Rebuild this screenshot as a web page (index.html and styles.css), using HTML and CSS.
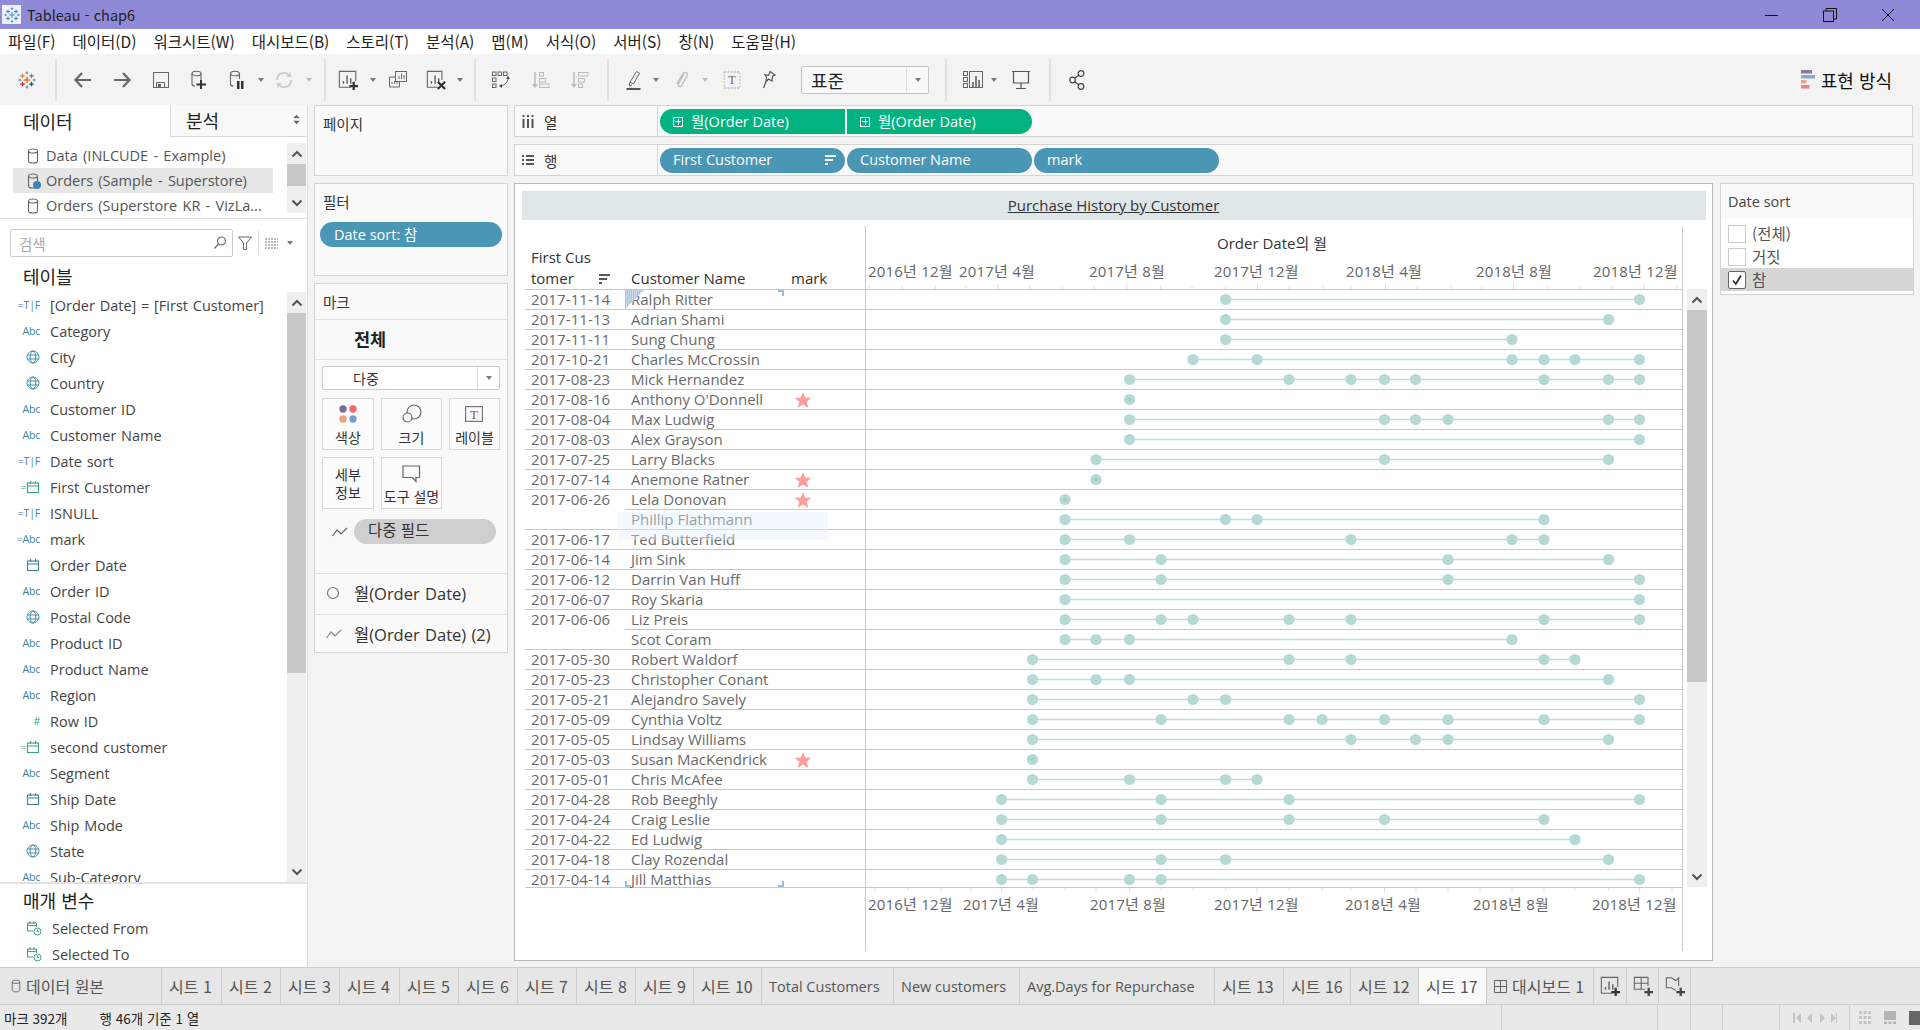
FILE: index.html
```html
<!DOCTYPE html>
<html lang="ko">
<head>
<meta charset="utf-8">
<title>Tableau - chap6</title>
<link rel="stylesheet" href="styles.css">
</head>
<body>
<svg class="defs" width="0" height="0">
  <symbol id="logo" viewBox="0 0 20 20">
    <g fill="none" stroke-width="1.4">
      <path stroke="#e8762b" stroke-width="1.7" d="M6.5 10h7M10 6.5v7"/>
      <path stroke="#e8762b" d="M2.5 5.5h5M5 3v5"/>
      <path stroke="#5b879b" d="M12.5 5.5h5M15 3v5"/>
      <path stroke="#c72037" d="M2.5 14.500h5M5 12v5"/>
      <path stroke="#1f457e" d="M12.5 14.500h5M15 12v5"/>
      <path stroke="#6f97aa" d="M8.500 2h3M10 .5v3M8.500 18h3M10 16.500v3M.5 10h3M2 8.500v3M16.500 10h3M18 8.500v3"/>
    </g>
  </symbol>
  <symbol id="logo-b" viewBox="0 0 20 20">
    <path fill="none" stroke="#3d8fc4" stroke-width="1.300" d="M6.5 10h7M10 6.500v7M2.500 5.500h5M5 3v5M12.500 5.500h5M15 3v5M2.500 14.500h5M5 12v5M12.500 14.500h5M15 12v5M8.500 2h3M10 .5v3M8.500 18h3M10 16.500v3M.5 10h3M2 8.500v3M16.500 10h3M18 8.500v3"/>
  </symbol>
  <symbol id="chev-up" viewBox="0 0 12 8"><path fill="none" stroke="#555" stroke-width="2" d="M1.500 6.500 6 2l4.500 4.500"/></symbol>
  <symbol id="chev-down" viewBox="0 0 12 8"><path fill="none" stroke="#555" stroke-width="2" d="M1.500 1.500 6 6l4.500-4.500"/></symbol>
  <symbol id="globe" viewBox="0 0 14 14"><g fill="none" stroke="#4a8eab"><circle cx="7" cy="7" r="6"/><ellipse cx="7" cy="7" rx="2.800" ry="6"/><path d="M1 5h12M1 9h12"/></g></symbol>
  <symbol id="cal" viewBox="0 0 14 14"><g fill="none" stroke="#3f7f9c" stroke-width="1.100"><rect x="1.500" y="3" width="11" height="9.500"/><path d="M1.500 6h11M4.500 1v3M9.500 1v3"/></g></symbol>
  <symbol id="cal-g" viewBox="0 0 14 14"><g fill="none" stroke="#3fa17d" stroke-width="1.100"><rect x="1.500" y="3" width="11" height="9.500"/><path d="M1.500 6h11M4.500 1v3M9.500 1v3"/></g></symbol>
  <symbol id="cal-clock" viewBox="0 0 16 16"><g fill="none" stroke="#3fa17d"><path d="M7 11H1.500V3h9v4M1.500 5.500h9M4 1v3M8 1v3"/><circle fill="#fff" cx="11.500" cy="11.500" r="3.500"/><path d="M11.500 9.500v2h1.500"/></g></symbol>
  <symbol id="db" viewBox="0 0 12 16"><g fill="none" stroke="#666" stroke-width="1.100"><ellipse cx="6" cy="3" rx="4.500" ry="2"/><path d="M1.500 3v10c0 1.100 2 2 4.500 2s4.500-.9 4.500-2V3"/></g></symbol>
  <symbol id="star" viewBox="0 0 20 20"><polygon fill="#ff9d9d" points="10,1 12.500,7.500 19.500,7.500 14,12 16,19 10,15 4,19 6,12 .5,7.500 7.500,7.500"/></symbol>
  <symbol id="sort" viewBox="0 0 12 12"><path d="M0 1h11v2H0zM0 5h8v2H0zM0 9h3v2H0z"/></symbol>
  <symbol id="minichart" viewBox="0 0 22 22"><g fill="none" stroke="#666" stroke-width="1.200"><path d="M14 19H1.500V1.500h18V12"/><path stroke-width="1.600" d="M6 15v-3M10 15V6M14 15V9"/></g><path fill="#333" d="M16 13h2.500v3.500H22V19h-3.500v3H16v-3h-3.500v-2.500H16z"/></symbol>
</svg>

<header class="titlebar">
  <span class="app-logo"><svg width="16" height="16"><use href="#logo-b"/></svg></span>
  <span class="app-title">Tableau - chap6</span>
  <div class="winctl">
    <svg width="14" height="14" viewBox="0 0 14 14"><path stroke="#111" d="M0 7.500h13"/></svg>
    <svg width="14" height="14" viewBox="0 0 14 14"><g fill="none" stroke="#111"><rect x=".5" y="3" width="10" height="10.500"/><path d="M3 3V.5h10.500V11H11"/></g></svg>
    <svg width="14" height="14" viewBox="0 0 14 14"><path stroke="#111" d="M1 1l12 12M13 1 1 13"/></svg>
  </div>
</header>

<nav class="menubar">
  <span>파일(F)</span><span>데이터(D)</span><span>워크시트(W)</span><span>대시보드(B)</span><span>스토리(T)</span><span>분석(A)</span><span>맵(M)</span><span>서식(O)</span><span>서버(S)</span><span>창(N)</span><span>도움말(H)</span>
</nav>

<div class="toolbar">
  <div class="tools">
    <svg width="18" height="18"><use href="#logo"/></svg>
    <i class="sep"></i>
    <svg width="20" height="18" viewBox="0 0 20 18"><path fill="none" stroke="#666" stroke-width="2.200" d="M18 9H3M9 2 2.500 9 9 16"/></svg>
    <svg width="20" height="18" viewBox="0 0 20 18"><path fill="none" stroke="#666" stroke-width="2.200" d="M2 9h15M11 2l6.500 7L11 16"/></svg>
    <svg width="16" height="16" viewBox="0 0 16 16"><g fill="none" stroke="#666"><rect x=".5" y=".5" width="15" height="15"/><path d="M3.500 15.500v-5h8v5"/></g><rect fill="#666" x="5" y="12" width="3" height="3"/></svg>
    <svg width="18" height="20" viewBox="0 0 18 20"><g fill="none" stroke="#666" stroke-width="1.100"><ellipse cx="6.500" cy="3.500" rx="4.500" ry="2.300"/><path d="M2 3.500V14c0 1.200 1.500 2 3 2M11 3.500V10"/></g><path fill="#333" d="M10 10h2v3.500h4v2h-4V19h-2v-3.500H6.500v-2H10z"/></svg>
    <svg width="16" height="20" viewBox="0 0 16 20"><g fill="none" stroke="#666" stroke-width="1.100"><ellipse cx="6" cy="3.500" rx="4.500" ry="2.300"/><path d="M1.500 3.500V14c0 1.200 1.500 2 3 2M10.500 3.500V9"/></g><path fill="#333" d="M8 11h2.500v8H8zM12 11h2.500v8H12z"/></svg>
    <i class="dd"></i>
    <svg width="18" height="18" viewBox="0 0 18 18"><g fill="none" stroke="#ccc" stroke-width="1.800"><path d="M2 9a7 7 0 0 1 12-5M16 9a7 7 0 0 1-12 5"/></g><path fill="#ccc" d="M11 6h5V1zM7 12H2v5z"/></svg>
    <i class="dd dd-off"></i>
    <i class="sep"></i>
    <svg width="20" height="20"><use href="#minichart"/></svg>
    <i class="dd"></i>
    <svg width="18" height="17" viewBox="0 0 18 17"><g fill="none" stroke="#666"><rect x="6.500" y=".5" width="11" height="10"/><path d="M6 6H.5v10h10v-5"/><path d="M10 8V5M12.500 8V2.500M15 8V4M3 13v-2M5.500 13v-3M8 13v-2"/></g></svg>
    <svg width="20" height="20" viewBox="0 0 22 22"><g fill="none" stroke="#666" stroke-width="1.200"><path d="M13 19H1.500V1.500h16V11"/><path stroke-width="1.600" d="M6 15v-3M10 15V6M14 13V9"/></g><path stroke="#333" stroke-width="2.400" d="M13 13l8 8M21 13l-8 8"/></svg>
    <i class="dd"></i>
    <i class="sep"></i>
    <svg width="18" height="18" viewBox="0 0 18 18"><g fill="none" stroke="#666"><rect x=".5" y="1" width="3.500" height="3.500"/><rect x="6" y="1" width="3.500" height="3.500"/><rect x="11.500" y="1" width="3.500" height="3.500"/><rect x=".5" y="7" width="3.500" height="3.500"/><rect x=".5" y="13" width="3.500" height="3.500"/><path d="M16 7c0 4-3 7-7 8"/></g><path fill="#444" d="M14 8l2-3 2 3zM10 13v4l-3-2z"/></svg>
    <svg width="18" height="18" viewBox="0 0 18 18"><g fill="none" stroke="#bbb"><path stroke-width="1.500" d="M3 1v14"/><rect x="7.500" y="1.500" width="4" height="3.500"/><rect x="7.500" y="7.500" width="6" height="3.500"/><rect x="7.500" y="13" width="9.500" height="3.500"/></g><path fill="#bbb" d="M0 13h6l-3 4z"/></svg>
    <svg width="18" height="18" viewBox="0 0 18 18"><g fill="none" stroke="#bbb"><path stroke-width="1.500" d="M3 1v14"/><rect x="7.500" y="1.500" width="9.500" height="3.500"/><rect x="7.500" y="7.500" width="6" height="3.500"/><rect x="7.500" y="13" width="4" height="3.500"/></g><path fill="#bbb" d="M0 13h6l-3 4z"/></svg>
    <i class="sep"></i>
    <svg width="16" height="20" viewBox="0 0 16 20"><path fill="none" stroke="#666" d="M10.500 1.500l3 1.800-6 10.500-3.500-1.600zM4 12.200 3 15.800l3-.8"/><path stroke="#555" stroke-width="2" d="M.5 19h14"/></svg>
    <i class="dd"></i>
    <svg width="14" height="20" viewBox="0 0 14 20"><path fill="none" stroke="#bbb" stroke-width="1.300" d="M10 4 4.500 14c-1 2.400 2 3.600 3.200 1.500L13 6c1.300-3-2.400-5-4-2.300L2.500 14"/></svg>
    <i class="dd dd-off"></i>
    <svg width="17" height="18" viewBox="0 0 18 18"><rect fill="none" stroke="#999" stroke-dasharray="2 1.500" x=".5" y=".5" width="17" height="17"/><text class="t-glyph" x="9" y="13.500" text-anchor="middle">T</text></svg>
    <svg width="14" height="20" viewBox="0 0 14 20"><path fill="none" stroke="#555" stroke-width="1.200" d="M8 1.500l5 3.500-2.500 1.200L10 11 6.500 9 3.800 12l.8-4.500L3 4.800 6.800 5.400zM3.800 12 1.500 18"/></svg>
    <div class="std-select"><span>표준</span><b><i class="dd"></i></b></div>
    <i class="sep"></i>
    <svg width="20" height="18" viewBox="0 0 20 18"><g fill="none" stroke="#666"><rect x=".5" y=".5" width="4" height="4"/><rect x=".5" y="6.500" width="4" height="4"/><rect x=".5" y="12.500" width="4" height="4"/><rect x="6.500" y=".5" width="13" height="16"/></g><path stroke="#666" stroke-width="1.600" d="M10 16v-5M13 16V5M16 16V9"/></svg>
    <i class="dd"></i>
    <svg width="18" height="20" viewBox="0 0 18 20"><g fill="none" stroke="#555" stroke-width="1.200"><path d="M0 1.500h18M1.500 1.500V13h15V1.500M9 13v5.500M4 18.500h10"/></g></svg>
    <i class="sep"></i>
    <svg width="16" height="20" viewBox="0 0 16 20"><g fill="none" stroke="#444" stroke-width="1.200"><circle cx="12" cy="3.500" r="2.800"/><circle cx="3.500" cy="10" r="2.800"/><circle cx="12" cy="16.500" r="2.800"/><path d="M9.800 5.200 5.700 8.300M5.700 11.700l4.100 3.100"/></g></svg>
  </div>
  <div class="showme">
    <svg width="14" height="19" viewBox="0 0 14 19"><rect fill="#8a7aa0" width="11" height="3.500"/><rect fill="#85a9d0" y="5" width="14" height="3.500"/><rect fill="#f0a783" y="10" width="5.500" height="3.500"/><rect fill="#f6808c" y="15" width="8.500" height="3.500"/></svg>
    <span>표현 방식</span>
  </div>
</div>

<main class="main">
  <aside class="data-pane">
    <div class="pane-tabs">
      <div class="tab-data">데이터</div>
      <div class="tab-analysis"><span>분석</span><svg width="7" height="11" viewBox="0 0 8 14"><path fill="#666" d="M0 5.500 4 1l4 4.500zM0 8.500 4 13l4-4.500z"/></svg></div>
    </div>
    <div class="sources">
      <div class="source-list">
        <div class="source"><svg width="12" height="16"><use href="#db"/></svg>Data (INLCUDE - Example)</div>
        <div class="source on"><svg width="12" height="16"><use href="#db"/></svg><em class="tick"></em>Orders (Sample - Superstore)</div>
        <div class="source"><svg width="12" height="16"><use href="#db"/></svg>Orders (Superstore KR - VizLa...</div>
      </div>
      <div class="vscroll vs-src">
        <div class="vs-btn"><svg width="12" height="8"><use href="#chev-up"/></svg></div>
        <div class="vs-thumb"></div>
        <div class="vs-rest"></div>
        <div class="vs-btn"><svg width="12" height="8"><use href="#chev-down"/></svg></div>
      </div>
    </div>
    <div class="searchrow">
      <div class="search"><span>검색</span><svg width="14" height="14" viewBox="0 0 14 14"><g fill="none" stroke="#666" stroke-width="1.200"><circle cx="8.500" cy="5" r="4"/><path d="M5.500 8 1.500 12.500"/></g></svg></div>
      <svg class="funnel" width="14" height="14" viewBox="0 0 14 14"><path fill="none" stroke="#666" d="M.5 1h13L8.500 7v6.500h-3V7z"/></svg>
      <i class="vdiv"></i>
      <svg class="listicon" width="13" height="11" viewBox="0 0 13 11"><path stroke="#777" stroke-dasharray="2 1" d="M0 1h13M0 4h13M0 7h13M0 10h13"/></svg>
      <i class="dd"></i>
    </div>
    <h2 class="section-h">테이블</h2>
    <div class="fields-wrap">
      <ul class="fields">
        <li><span class="ic">=T|F</span>[Order Date] = [First Customer]</li>
        <li><span class="ic">Abc</span>Category</li>
        <li><span class="ic"><svg width="14" height="14"><use href="#globe"/></svg></span>City</li>
        <li><span class="ic"><svg width="14" height="14"><use href="#globe"/></svg></span>Country</li>
        <li><span class="ic">Abc</span>Customer ID</li>
        <li><span class="ic">Abc</span>Customer Name</li>
        <li><span class="ic">=T|F</span>Date sort</li>
        <li><span class="ic ic-g">=<svg width="14" height="14"><use href="#cal-g"/></svg></span>First Customer</li>
        <li><span class="ic">=T|F</span>ISNULL</li>
        <li><span class="ic">=Abc</span>mark</li>
        <li><span class="ic"><svg width="14" height="14"><use href="#cal"/></svg></span>Order Date</li>
        <li><span class="ic">Abc</span>Order ID</li>
        <li><span class="ic"><svg width="14" height="14"><use href="#globe"/></svg></span>Postal Code</li>
        <li><span class="ic">Abc</span>Product ID</li>
        <li><span class="ic">Abc</span>Product Name</li>
        <li><span class="ic">Abc</span>Region</li>
        <li><span class="ic ic-g">#</span>Row ID</li>
        <li><span class="ic ic-g">=<svg width="14" height="14"><use href="#cal-g"/></svg></span>second customer</li>
        <li><span class="ic">Abc</span>Segment</li>
        <li><span class="ic"><svg width="14" height="14"><use href="#cal"/></svg></span>Ship Date</li>
        <li><span class="ic">Abc</span>Ship Mode</li>
        <li><span class="ic"><svg width="14" height="14"><use href="#globe"/></svg></span>State</li>
        <li><span class="ic">Abc</span>Sub-Category</li>
      </ul>
      <div class="vscroll vs-fields">
        <div class="vs-btn"><svg width="12" height="8"><use href="#chev-up"/></svg></div>
        <div class="vs-thumb"></div>
        <div class="vs-rest"></div>
        <div class="vs-btn"><svg width="12" height="8"><use href="#chev-down"/></svg></div>
      </div>
    </div>
    <div class="params">
      <h2 class="section-h">매개 변수</h2>
      <div class="param"><svg width="16" height="16"><use href="#cal-clock"/></svg>Selected From</div>
      <div class="param"><svg width="16" height="16"><use href="#cal-clock"/></svg>Selected To</div>
    </div>
  </aside>

  <section class="cards">
    <div class="card card-pages"><h3>페이지</h3></div>
    <div class="card card-filters">
      <h3>필터</h3>
      <div class="pill pill-blue pill-filter">Date sort: 참</div>
    </div>
    <div class="card card-marks">
      <h3 class="marks-h">마크</h3>
      <div class="marks-all">전체</div>
      <div class="marks-body">
        <div class="mark-select"><span>다중</span><b><i class="dd"></i></b></div>
        <div class="mark-btns">
          <div class="mbtn"><svg width="20" height="20" viewBox="0 0 22 22"><circle cx="5.500" cy="5.500" r="4" fill="#7c6a9c"/><circle cx="16.500" cy="5.500" r="4" fill="#f4656f"/><circle cx="5.500" cy="16.500" r="4" fill="#f0a07a"/><circle cx="16.500" cy="16.500" r="4" fill="#6d9fcf"/></svg><span>색상</span></div>
          <div class="mbtn"><svg width="20" height="20" viewBox="0 0 20 20"><g fill="none" stroke="#666" stroke-width="1.200"><circle cx="12" cy="8" r="7"/><circle cx="5.500" cy="13.500" r="4.500" fill="#f9f9f9"/></g></svg><span>크기</span></div>
          <div class="mbtn"><svg width="20" height="18" viewBox="0 0 20 18"><rect fill="none" stroke="#777" stroke-width="1.200" x=".6" y=".6" width="16.800" height="14.800"/><text class="t-glyph" x="9" y="12.500" text-anchor="middle">T</text></svg><span>레이블</span></div>
          <div class="mbtn mbtn-text"><span>세부</span><span>정보</span></div>
          <div class="mbtn"><svg width="20" height="18" viewBox="0 0 20 18"><path fill="none" stroke="#666" stroke-width="1.200" d="M1 1h16.500v11.500h-3.500v4l-3.500-4H1z"/></svg><span>도구 설명</span></div>
        </div>
        <div class="mark-field">
          <svg width="16" height="10" viewBox="0 0 16 10"><path fill="none" stroke="#666" stroke-width="1.200" d="M.5 9 5 3l4 4 6-6"/></svg>
          <div class="gray-pill">다중 필드</div>
        </div>
      </div>
      <div class="marks-row"><span class="mr-ic"><svg width="14" height="14" viewBox="0 0 14 14"><circle fill="none" stroke="#777" stroke-width="1.200" cx="7" cy="7" r="5.500"/></svg></span><span>월(Order Date)</span></div>
      <div class="marks-row"><span class="mr-ic"><svg width="16" height="10" viewBox="0 0 16 10"><path fill="none" stroke="#888" stroke-width="1.200" d="M.5 9 5 3l4 4 6-6"/></svg></span><span>월(Order Date) (2)</span></div>
    </div>
  </section>

  <section class="work">
    <div class="shelf">
      <div class="shelf-h"><svg width="12" height="13" viewBox="0 0 12 13"><path stroke="#555" stroke-width="2" d="M1.500 4v9M6 4v9M10.500 4v9M1.500 0v2M6 0v2M10.500 0v2"/></svg><span>열</span></div>
      <div class="shelf-p">
        <div class="pill pill-green pill-l"><em class="plus"></em>월(Order Date)</div>
        <div class="pill pill-green pill-r"><em class="plus"></em>월(Order Date)</div>
      </div>
    </div>
    <div class="shelf">
      <div class="shelf-h"><svg width="12" height="12" viewBox="0 0 12 12"><path stroke="#555" stroke-width="2" d="M0 2h2M4 2h8M0 6h2M4 6h8M0 10h2M4 10h8"/></svg><span>행</span></div>
      <div class="shelf-p">
        <div class="pill pill-blue pill-sh"><span>First Customer</span><svg width="12" height="12"><use href="#sort" fill="#fff"/></svg></div>
        <div class="pill pill-blue pill-sh"><span>Customer Name</span></div>
        <div class="pill pill-blue pill-sh"><span>mark</span></div>
      </div>
    </div>
    <div class="view-row">
      <div class="worksheet">
        <div class="ws-title"><span>Purchase History by Customer</span></div>
        <div class="chart">
          <div class="table">
            <div class="thead">
              <div class="th th-d"><span>First Cus</span><span class="th-l2">tomer<svg width="12" height="12"><use href="#sort" fill="#555"/></svg></span></div>
              <div class="th th-n">Customer Name</div>
              <div class="th th-m">mark</div>
              <div class="axis">
                <svg class="axis-svg" width="816" height="63">
                  <text class="ax-title" x="406" y="23" text-anchor="middle">Order Date의 월</text>
                  <text x="2" y="51">2016년 12월</text><text x="93" y="51">2017년 4월</text><text x="223" y="51">2017년 8월</text><text x="348" y="51">2017년 12월</text><text x="480" y="51">2018년 4월</text><text x="610" y="51">2018년 8월</text><text x="727" y="51">2018년 12월</text>
                  <path class="ticks" d="M3 59v4M36 60v3M69.500 60v3M99.500 60v3M132 58v5M164 60v3M196.500 60v3M228 60v3M261 58v5M294.500 60v3M326 60v3M359.500 60v3M391.500 58v5M423 60v3M457 60v3M485 60v3M519.500 58v5M551 60v3M585 60v3M615.500 60v3M647.500 58v5M681 60v3M713.500 60v3M746.500 60v3M778 58v5M811 60v3"/>
                </svg>
              </div>
            </div>
            <div class="rows">
              <div class="tr"><div class="td d">2017-11-14</div><div class="td n">Ralph Ritter<i class="sel-hatch"></i><i class="sel-br sel-tr"></i></div><div class="td m"></div><div class="td p"><svg><path d="M359.500 9.500H773.500"/><circle cx="359.500"/><circle cx="773.500"/></svg></div></div>
              <div class="tr"><div class="td d">2017-11-13</div><div class="td n">Adrian Shami</div><div class="td m"></div><div class="td p"><svg><path d="M359.500 9.500H742.500"/><circle cx="359.500"/><circle cx="742.500"/></svg></div></div>
              <div class="tr"><div class="td d">2017-11-11</div><div class="td n">Sung Chung</div><div class="td m"></div><div class="td p"><svg><path d="M359.500 9.500H646"/><circle cx="359.500"/><circle cx="646"/></svg></div></div>
              <div class="tr"><div class="td d">2017-10-21</div><div class="td n">Charles McCrossin</div><div class="td m"></div><div class="td p"><svg><path d="M327 9.500H773.500"/><circle cx="327"/><circle cx="391"/><circle cx="646"/><circle cx="678"/><circle cx="709"/><circle cx="773.500"/></svg></div></div>
              <div class="tr"><div class="td d">2017-08-23</div><div class="td n">Mick Hernandez</div><div class="td m"></div><div class="td p"><svg><path d="M263.500 9.500H773.500"/><circle cx="263.500"/><circle cx="423"/><circle cx="485"/><circle cx="518.500"/><circle cx="549.500"/><circle cx="678"/><circle cx="742.500"/><circle cx="773.500"/></svg></div></div>
              <div class="tr"><div class="td d">2017-08-16</div><div class="td n">Anthony O'Donnell</div><div class="td m"><svg width="18" height="18"><use href="#star"/></svg></div><div class="td p"><svg><circle cx="263.500"/><circle class="core" cx="263.500"/></svg></div></div>
              <div class="tr"><div class="td d">2017-08-04</div><div class="td n">Max Ludwig</div><div class="td m"></div><div class="td p"><svg><path d="M263.500 9.500H773.500"/><circle cx="263.500"/><circle cx="518.500"/><circle cx="549.500"/><circle cx="582"/><circle cx="742.500"/><circle cx="773.500"/></svg></div></div>
              <div class="tr"><div class="td d">2017-08-03</div><div class="td n">Alex Grayson</div><div class="td m"></div><div class="td p"><svg><path d="M263.500 9.500H773.500"/><circle cx="263.500"/><circle cx="773.500"/></svg></div></div>
              <div class="tr"><div class="td d">2017-07-25</div><div class="td n">Larry Blacks</div><div class="td m"></div><div class="td p"><svg><path d="M230 9.500H742.500"/><circle cx="230"/><circle cx="518.500"/><circle cx="742.500"/></svg></div></div>
              <div class="tr"><div class="td d">2017-07-14</div><div class="td n">Anemone Ratner</div><div class="td m"><svg width="18" height="18"><use href="#star"/></svg></div><div class="td p"><svg><circle cx="230"/><circle class="core" cx="230"/></svg></div></div>
              <div class="tr"><div class="td d open">2017-06-26</div><div class="td n">Lela Donovan</div><div class="td m"><svg width="18" height="18"><use href="#star"/></svg></div><div class="td p"><svg><circle cx="199"/><circle class="core" cx="199"/></svg></div></div>
              <div class="tr"><div class="td d"></div><div class="td n">Phillip Flathmann</div><div class="td m"></div><div class="td p"><svg><path d="M199 9.500H678"/><circle cx="199"/><circle cx="359.500"/><circle cx="391"/><circle cx="678"/></svg></div></div>
              <div class="tr"><div class="td d">2017-06-17</div><div class="td n">Ted Butterfield</div><div class="td m"></div><div class="td p"><svg><path d="M199 9.500H678"/><circle cx="199"/><circle cx="263.500"/><circle cx="485"/><circle cx="646"/><circle cx="678"/></svg></div></div>
              <div class="tr"><div class="td d">2017-06-14</div><div class="td n">Jim Sink</div><div class="td m"></div><div class="td p"><svg><path d="M199 9.500H742.500"/><circle cx="199"/><circle cx="295"/><circle cx="582"/><circle cx="742.500"/></svg></div></div>
              <div class="tr"><div class="td d">2017-06-12</div><div class="td n">Darrin Van Huff</div><div class="td m"></div><div class="td p"><svg><path d="M199 9.500H773.500"/><circle cx="199"/><circle cx="295"/><circle cx="582"/><circle cx="773.500"/></svg></div></div>
              <div class="tr"><div class="td d">2017-06-07</div><div class="td n">Roy Skaria</div><div class="td m"></div><div class="td p"><svg><path d="M199 9.500H773.500"/><circle cx="199"/><circle cx="773.500"/></svg></div></div>
              <div class="tr"><div class="td d open">2017-06-06</div><div class="td n">Liz Preis</div><div class="td m"></div><div class="td p"><svg><path d="M199 9.500H773.500"/><circle cx="199"/><circle cx="295"/><circle cx="327"/><circle cx="423"/><circle cx="485"/><circle cx="678"/><circle cx="773.500"/></svg></div></div>
              <div class="tr"><div class="td d"></div><div class="td n">Scot Coram</div><div class="td m"></div><div class="td p"><svg><path d="M199 9.500H646"/><circle cx="199"/><circle cx="230"/><circle cx="263.500"/><circle cx="646"/></svg></div></div>
              <div class="tr"><div class="td d">2017-05-30</div><div class="td n">Robert Waldorf</div><div class="td m"></div><div class="td p"><svg><path d="M166.500 9.500H709"/><circle cx="166.500"/><circle cx="423"/><circle cx="485"/><circle cx="678"/><circle cx="709"/></svg></div></div>
              <div class="tr"><div class="td d">2017-05-23</div><div class="td n">Christopher Conant</div><div class="td m"></div><div class="td p"><svg><path d="M166.500 9.500H742.500"/><circle cx="166.500"/><circle cx="230"/><circle cx="263.500"/><circle cx="742.500"/></svg></div></div>
              <div class="tr"><div class="td d">2017-05-21</div><div class="td n">Alejandro Savely</div><div class="td m"></div><div class="td p"><svg><path d="M166.500 9.500H773.500"/><circle cx="166.500"/><circle cx="327"/><circle cx="359.500"/><circle cx="773.500"/></svg></div></div>
              <div class="tr"><div class="td d">2017-05-09</div><div class="td n">Cynthia Voltz</div><div class="td m"></div><div class="td p"><svg><path d="M166.500 9.500H773.500"/><circle cx="166.500"/><circle cx="295"/><circle cx="423"/><circle cx="456"/><circle cx="518.500"/><circle cx="582"/><circle cx="678"/><circle cx="773.500"/></svg></div></div>
              <div class="tr"><div class="td d">2017-05-05</div><div class="td n">Lindsay Williams</div><div class="td m"></div><div class="td p"><svg><path d="M166.500 9.500H742.500"/><circle cx="166.500"/><circle cx="485"/><circle cx="549.500"/><circle cx="582"/><circle cx="742.500"/></svg></div></div>
              <div class="tr"><div class="td d">2017-05-03</div><div class="td n">Susan MacKendrick</div><div class="td m"><svg width="18" height="18"><use href="#star"/></svg></div><div class="td p"><svg><circle cx="166.500"/><circle class="core" cx="166.500"/></svg></div></div>
              <div class="tr"><div class="td d">2017-05-01</div><div class="td n">Chris McAfee</div><div class="td m"></div><div class="td p"><svg><path d="M166.500 9.500H391"/><circle cx="166.500"/><circle cx="263.500"/><circle cx="359.500"/><circle cx="391"/></svg></div></div>
              <div class="tr"><div class="td d">2017-04-28</div><div class="td n">Rob Beeghly</div><div class="td m"></div><div class="td p"><svg><path d="M135.500 9.500H773.500"/><circle cx="135.500"/><circle cx="295"/><circle cx="423"/><circle cx="773.500"/></svg></div></div>
              <div class="tr"><div class="td d">2017-04-24</div><div class="td n">Craig Leslie</div><div class="td m"></div><div class="td p"><svg><path d="M135.500 9.500H678"/><circle cx="135.500"/><circle cx="295"/><circle cx="423"/><circle cx="518.500"/><circle cx="678"/></svg></div></div>
              <div class="tr"><div class="td d">2017-04-22</div><div class="td n">Ed Ludwig</div><div class="td m"></div><div class="td p"><svg><path d="M135.500 9.500H709"/><circle cx="135.500"/><circle cx="709"/></svg></div></div>
              <div class="tr"><div class="td d">2017-04-18</div><div class="td n">Clay Rozendal</div><div class="td m"></div><div class="td p"><svg><path d="M135.500 9.500H742.500"/><circle cx="135.500"/><circle cx="295"/><circle cx="359.500"/><circle cx="742.500"/></svg></div></div>
              <div class="tr tr-last"><div class="td d">2017-04-14</div><div class="td n">Jill Matthias<i class="sel-br sel-bl"></i><i class="sel-br sel-brr"></i></div><div class="td m"></div><div class="td p"><svg><path d="M135.500 9.500H773.500"/><circle cx="135.500"/><circle cx="166.500"/><circle cx="263.500"/><circle cx="295"/><circle cx="773.500"/></svg></div></div>
              <div class="ghost"></div>
            </div>
            <div class="tfoot">
              <div class="axis axis-b">
                <svg class="axis-svg" width="816" height="62">
                  <path class="ticks" d="M9 0v3M42 0v3M75 0v3M105 0v3M135.500 0v5M167 0v3M199 0v3M230 0v3M263.500 0v5M295 0v3M327 0v3M359.500 0v3M391 0v5M423 0v3M456 0v3M485 0v3M518.500 0v5M550 0v3M582 0v3M614 0v3M646 0v5M678 0v3M709 0v3M742.500 0v3M773.500 0v5M806 0v3"/>
                  <text x="2" y="22">2016년 12월</text><text x="97" y="22">2017년 4월</text><text x="224" y="22">2017년 8월</text><text x="348" y="22">2017년 12월</text><text x="479" y="22">2018년 4월</text><text x="607" y="22">2018년 8월</text><text x="726" y="22">2018년 12월</text>
                </svg>
              </div>
            </div>
          </div>
          <div class="vscroll vs-chart">
            <div class="vs-btn"><svg width="12" height="8"><use href="#chev-up"/></svg></div>
            <div class="vs-thumb"></div>
            <div class="vs-rest"></div>
            <div class="vs-btn"><svg width="12" height="8"><use href="#chev-down"/></svg></div>
          </div>
        </div>
      </div>
      <div class="filter-card">
        <div class="filter-h">Date sort</div>
        <div class="filter-list">
          <div class="fopt"><i class="cb"></i><span>(전체)</span></div>
          <div class="fopt"><i class="cb"></i><span>거짓</span></div>
          <div class="fopt on"><i class="cb cb-on"><svg width="12" height="12" viewBox="0 0 12 12"><path fill="none" stroke="#333" stroke-width="1.800" d="M2 6.500 4.800 10 10 1.500"/></svg></i><span>참</span></div>
        </div>
      </div>
    </div>
  </section>
</main>

<div class="tabs">
  <div class="tab tab-ko tab-src"><svg width="10" height="14"><use href="#db"/></svg>데이터 원본</div>
  <div class="tab tab-ko">시트 1</div><div class="tab tab-ko">시트 2</div><div class="tab tab-ko">시트 3</div><div class="tab tab-ko">시트 4</div><div class="tab tab-ko">시트 5</div><div class="tab tab-ko">시트 6</div><div class="tab tab-ko">시트 7</div><div class="tab tab-ko">시트 8</div><div class="tab tab-ko">시트 9</div><div class="tab tab-ko">시트 10</div>
  <div class="tab">Total Customers</div><div class="tab">New customers</div><div class="tab">Avg.Days for Repurchase</div>
  <div class="tab tab-ko">시트 13</div><div class="tab tab-ko">시트 16</div><div class="tab tab-ko">시트 12</div><div class="tab tab-ko tab-on">시트 17</div>
  <div class="tab tab-ko tab-dash"><svg width="13" height="13" viewBox="0 0 13 13"><path fill="none" stroke="#666" d="M.5.500h12v12H.5zM6.500.5v12M.5 6.500h12"/></svg>대시보드 1</div>
  <div class="tab tab-icon"><svg width="20" height="20"><use href="#minichart"/></svg></div>
  <div class="tab tab-icon"><svg width="20" height="20" viewBox="0 0 22 22"><path fill="none" stroke="#666" stroke-width="1.200" d="M13 14.500H1.500V1.500h15V11M9 1.500v13M1.500 8h15"/><path fill="#444" d="M16 13h2.500v3.500H22V19h-3.500v3H16v-3h-3.500v-2.500H16z"/></svg></div>
  <div class="tab tab-icon"><svg width="20" height="20" viewBox="0 0 22 22"><path fill="none" stroke="#666" stroke-width="1.200" d="M12 16 7 13H1.500V2H7l5 3 3-3v9"/><path fill="#444" d="M16 13h2.500v3.500H22V19h-3.500v3H16v-3h-3.500v-2.500H16z"/></svg></div>
  <div class="tab tab-fill"></div>
</div>

<footer class="status">
  <div class="st st-main"><span>마크 392개</span><span>행 46개 기준 1 열</span></div>
  <div class="st"></div><div class="st"></div><div class="st"></div><div class="st"></div>
  <div class="st st-nav">
    <svg width="44" height="12" viewBox="0 0 44 12"><g fill="#c4c4c4"><path d="M0 1h2v10H0zM8 1v10L3 6zM19 1v10l-5-5zM27 1v10l5-5zM38 1v10l5-5zM43 1h1v10h-1z"/></g></svg>
  </div>
  <div class="st st-views">
    <svg width="12" height="14" viewBox="0 0 12 14"><path fill="#c4c4c4" d="M0 0h3v3H0zM4.500 0h3v3h-3zM9 0h3v3H9zM0 5h3v3H0zM4.500 5h3v3h-3zM9 5h3v3H9zM0 10h3v3H0zM4.500 10h3v3h-3zM9 10h3v3H9z"/></svg>
    <svg width="12" height="14" viewBox="0 0 12 14"><path fill="#b4b4b4" d="M0 0h12v9H0zM0 10.500h3V13H0zM4.500 10.500h3V13h-3zM9 10.500h3V13H9z"/></svg>
    <svg width="12" height="14" viewBox="0 0 12 14"><rect fill="#666" width="11" height="14"/></svg>
  </div>
</footer>
</body>
</html>
```
FILE: styles.css
```css
* { box-sizing: border-box; }
html, body { margin: 0; height: 100%; }
body {
  width: 1920px; height: 1030px; overflow: hidden;
  display: flex; flex-direction: column;
  font-family: "Open Sans", "Noto Sans CJK KR", sans-serif;
  font-size: 14.5px; color: #333; background: #f3f3f3;
}
.defs { position: absolute; }
h2, h3, ul { margin: 0; padding: 0; font-weight: 400; }
em, i { font-style: normal; }

/* chrome */
.titlebar { height: 29px; background: #8f8ad8; display: flex; align-items: center; flex: none; }
.app-logo { width: 19px; height: 19px; margin-left: 2px; background: #eef; display: flex; align-items: center; justify-content: center; }
.app-title { margin-left: 6px; font: 14.5px "Noto Sans CJK KR", sans-serif; color: #222; }
.winctl { margin-left: auto; display: flex; gap: 44px; padding-right: 25px; }

.menubar { height: 25px; background: #fff; display: flex; align-items: center; gap: 17px; padding-left: 8px; flex: none; font: 15.5px/25px "Noto Sans CJK KR", sans-serif; color: #222; }

.toolbar { height: 51px; flex: none; background: #f3f3f3; display: flex; align-items: center; padding-left: 27px; }
.tools { display: grid; align-items: center; height: 100%; grid-auto-flow: column;
  grid-template-columns: 29px 27px 39px 39px 38px 38px 24px 23px 25px 16px 23px 25px 25px 38px 24px 15px 26px 40px 39px 28px 26px 22px 25px 24px 27px 37px 96px 81px 27px 21px 27px 29px 27px; }
.tools > * { justify-self: start; transform: translateX(-50%); }
.sep { width: 1px; height: 42px; background: #ccc; display: block; }
.dd { display: block; width: 0; height: 0; border: 3.5px solid transparent; border-top: 4px solid #777; border-bottom: 0; }
.dd-off { border-top-color: #bbb; }
.t-glyph { font: 400 13px "Liberation Serif", serif; fill: #666; }
.std-select { width: 128px; height: 28px; background: #f8f8f8; border: 1px solid #c4c4c4; border-radius: 2px; display: flex; align-items: center; font: 18px "Noto Sans CJK KR", sans-serif; color: #222; padding-left: 9px; }
.std-select span { flex: 1; }
.std-select b, .mark-select b { width: 22px; height: 100%; border-left: 1px solid #ddd; display: flex; align-items: center; justify-content: center; }
.showme { margin-left: auto; margin-right: 28px; display: flex; align-items: center; gap: 6px; font: 18px "Noto Sans CJK KR", sans-serif; color: #111; }

.main { height: 862px; flex: none; display: flex; }

/* data pane */
.data-pane { width: 308px; flex: none; background: #fff; border-right: 1px solid #ddd; display: flex; flex-direction: column; }
.pane-tabs { height: 32px; display: flex; font: 18px "Noto Sans CJK KR", sans-serif; color: #222; flex: none; }
.tab-data { width: 170px; padding: 3px 0 0 23px; }
.tab-analysis { flex: 1; background: #f9f9f9; border: 1px solid #d8d8d8; border-width: 0 0 1px 1px; display: flex; align-items: center; justify-content: space-between; padding: 0 7px 2px 15px; }
.sources { height: 82px; flex: none; display: flex; border-bottom: 1px solid #e2e2e2; padding-top: 6px; }
.source-list { width: 287px; padding-left: 13px; padding-right: 14px; color: #555; font-size: 14.5px; }
.source { height: 25px; display: flex; align-items: center; gap: 7px; padding-left: 14px; white-space: nowrap; word-spacing: 1.5px; position: relative; }
.source.on { background: #e6e6e6; }
.tick { position: absolute; left: 20px; top: 13px; width: 8px; height: 8px; border-radius: 50%; background: #3a86b4; }
.vscroll { display: flex; flex-direction: column; background: #efefef; width: 19px; flex: none; }
.vs-btn { height: 21px; display: flex; align-items: center; justify-content: center; flex: none; }
.vs-thumb { background: #c8c8c8; flex: none; }
.vs-rest { flex: 1; }
.vs-src { height: 70px; }
.vs-src .vs-thumb { height: 22px; }
.vs-fields { height: 590px; }
.vs-fields .vs-thumb { height: 360px; }
.vs-chart { width: 20px; height: 598px; margin: 63px 0 0 4px; }
.vs-chart .vs-thumb { height: 372px; }

.searchrow { height: 44px; flex: none; display: flex; align-items: center; padding: 6px 0 2px 10px; }
.search { width: 223px; height: 28px; border: 1px solid #ccc; border-radius: 2px; display: flex; align-items: center; justify-content: space-between; padding: 0 5px 0 8px; color: #aaa; font-size: 14.5px; }
.funnel { margin-left: 5px; }
.vdiv { width: 1px; height: 24px; background: #ddd; margin: 0 6px 0 6px; }
.listicon { margin-right: 9px; }
.section-h { font: 18px/27px "Noto Sans CJK KR", sans-serif; color: #222; padding-left: 23px; flex: none; height: 27px; }
.fields-wrap { height: 592px; flex: none; display: flex; overflow: hidden; align-items: flex-start; border-bottom: 2px solid #e2e2e2; margin-top: 2px; }
.fields { width: 287px; list-style: none; flex: none; height: 592px; overflow: hidden; color: #444; }
.fields li { height: 26px; display: flex; align-items: center; white-space: nowrap; word-spacing: 1px; }
.ic { width: 40px; margin-right: 10px; text-align: right; font-size: 10.5px; color: #3f7f9c; display: flex; justify-content: flex-end; align-items: center; letter-spacing: -.2px; }
.ic-g { color: #3fa17d; }
.params { flex: 1; }
.params .section-h { height: 31px; line-height: 32px; }
.param { height: 26px; display: flex; align-items: center; gap: 10px; padding-left: 26px; color: #444; }

/* cards */
.cards { width: 194px; margin-left: 6px; flex: none; display: flex; flex-direction: column; gap: 7px; }
.card { background: #f9f9f9; border: 1px solid #d4d4d4; flex: none; }
.card h3 { font: 14.5px/36px "Noto Sans CJK KR", sans-serif; color: #333; padding-left: 8px; }
.card-pages { height: 71px; }
.card-filters { height: 93px; }
.card-marks { height: 370px; display: flex; flex-direction: column; }
.pill { color: #fff; height: 25px; display: flex; align-items: center; white-space: nowrap; font-size: 14.5px; padding-bottom: 2px; }
.pill-blue { background: #4a96b5; border-radius: 13px; }
.pill-filter { width: 182px; margin: 2px 0 0 5px; padding-left: 14px; }
.marks-h { height: 36px; border-bottom: 1px solid #e2e2e2; flex: none; }
.marks-all { height: 40px; border-bottom: 1px solid #e2e2e2; padding-left: 39px; font: 700 17.5px/38px "Noto Sans CJK KR", sans-serif; color: #222; flex: none; }
.marks-body { height: 214px; border-bottom: 1px solid #e2e2e2; padding: 6px 7px 0; flex: none; }
.mark-select { height: 24px; border: 1px solid #ccc; border-radius: 2px; background: #fff; display: flex; align-items: center; padding-left: 30px; font: 14px "Noto Sans CJK KR", sans-serif; width: 178px; }
.mark-select span { flex: 1; }
.mark-btns { display: grid; grid-template-columns: 52px 61px 51px; gap: 7px; grid-auto-rows: 52px; margin-top: 8px; }
.mbtn { background: #fbfbfb; border: 1px solid #d8d8d8; display: flex; flex-direction: column; align-items: center; justify-content: flex-end; padding-bottom: 3px; gap: 4px; font: 14px/18px "Noto Sans CJK KR", sans-serif; color: #333; white-space: nowrap; }
.mbtn-text { justify-content: center; gap: 0; padding: 0; }
.mark-field { display: flex; align-items: center; margin-top: 10px; padding-left: 10px; gap: 6px; }
.gray-pill { width: 142px; height: 25px; border-radius: 13px; background: #cfcfcf; font: 15.5px/21px "Noto Sans CJK KR", sans-serif; padding-left: 14px; }
.marks-row { height: 40px; display: flex; align-items: center; flex: none; font-size: 16.5px; color: #333; padding-bottom: 2px; word-spacing: 1px; }
.marks-row + .marks-row { border-top: 1px solid #e2e2e2; }
.mr-ic { width: 39px; padding-left: 11px; display: flex; flex: none; }

/* shelves */
.work { width: 1399px; margin-left: 6px; flex: none; display: flex; flex-direction: column; gap: 7px; }
.shelf { height: 32px; flex: none; background: #f9f9f9; border: 1px solid #d4d4d4; display: flex; }
.shelf-h { width: 143px; border-right: 1px solid #d8d8d8; display: flex; align-items: center; gap: 10px; padding-left: 7px; font: 14.5px "Noto Sans CJK KR", sans-serif; flex: none; }
.shelf-p { display: flex; gap: 2px; padding: 3px 0 0 2px; }
.pill-green { background: #02b280; width: 185px; padding-left: 13px; gap: 8px; }
.pill-l { border-radius: 13px 0 0 13px; }
.pill-r { border-radius: 0 13px 13px 0; }
.plus { width: 10px; height: 10px; margin-top: 2px; border: 1px solid #fff; background: linear-gradient(#fff,#fff) center/6px 1px no-repeat, linear-gradient(#fff,#fff) center/1px 6px no-repeat; }
.pill-sh { width: 185px; padding: 0 8px 2px 13px; justify-content: space-between; }

/* worksheet */
.view-row { display: flex; gap: 7px; align-items: flex-start; }
.worksheet { width: 1199px; height: 778px; flex: none; background: #fff; border: 1px solid #b8b8b8; padding: 7px 6px 0 7px; }
.ws-title { height: 29px; background: #dfe6e8; text-align: center; font-size: 15px; line-height: 29px; color: #333; text-decoration: underline; padding-right: 1px; }
.chart { display: flex; margin: 6px 0 0 3px; align-items: flex-start; }
.table { width: 1158px; flex: none; position: relative; }
.thead { height: 64px; display: flex; border-bottom: 1px solid #c8c8c8; align-items: flex-end; }
.th { font-size: 15px; color: #333; height: 22px; line-height: 22px; }
.th-d { width: 100px; padding-left: 6px; height: 43px; display: flex; flex-direction: column; }
.th-l2 { display: flex; justify-content: space-between; align-items: center; padding-right: 14px; line-height: 21px; }
.th-n { width: 160px; padding-left: 6px; }
.th-m { width: 80px; padding-left: 6px; }
.axis { width: 818px; height: 63px; border: 1px solid #c8c8c8; border-width: 0 1px; align-self: flex-start; }
.axis-svg { display: block; overflow: visible; }
.axis-svg text { font-family: "Open Sans", "Noto Sans CJK KR", sans-serif; font-size: 15px; fill: #666; letter-spacing: .2px; }
.axis-svg .ax-title { fill: #333; font-size: 15px; letter-spacing: 0; }
.ticks { stroke: #ddd; fill: none; }
.tr { height: 20px; display: flex; }
.td { height: 20px; border-bottom: 1px solid #c8c8c8; font-size: 15px; line-height: 19px; color: #6a6a6a; padding-left: 6px; flex: none; white-space: nowrap; position: relative; }
.td.d { width: 100px; letter-spacing: .1px; }
.td.d.open { border-bottom-color: transparent; }
.td.n { width: 160px; }
.td.m { width: 80px; padding-left: 9px; }
.td.m svg { display: block; margin-top: 1px; }
.td.p { width: 818px; padding: 0; border-left: 1px solid #c8c8c8; border-right: 1px solid #c8c8c8; }
.td.p svg { display: block; width: 816px; height: 19px; overflow: visible; }
.td.p path { fill: none; stroke: #bcdfd9; stroke-width: 1.5; }
.td.p circle { r: 5.6px; cy: 9.5px; fill: #b5d9d4; }
.td.p circle.core { r: 2px; fill: #a3cfc8; }
.tr-last, .tr-last .td { height: 18px; }
.tfoot { height: 63px; }
.axis-b { height: 63px; margin-left: 340px; }
.ghost { position: absolute; left: 93px; top: 286px; width: 210px; height: 28px; background: rgba(225, 240, 252, .4); }
.sel-hatch { position: absolute; left: 0; top: 0; width: 19px; height: 19px; background: repeating-linear-gradient(90deg, #a3c3de 0 1px, #c8dced 1px 2px); clip-path: polygon(0 0, 100% 0, 0 100%); }
.sel-br { position: absolute; width: 6px; height: 6px; border: 0 solid #9dbcd8; }
.sel-tr { right: 1px; top: 0; border-width: 2px 2px 0 0; }
.sel-bl { left: 0; bottom: 0; border-width: 0 0 2px 2px; }
.sel-brr { right: 1px; bottom: 0; border-width: 0 2px 2px 0; }

/* filter card */
.filter-card { width: 194px; height: 112px; flex: none; background: #fff; border: 1px solid #d4d4d4; }
.filter-h { height: 35px; background: #f9f9f9; padding-left: 7px; line-height: 36px; font-size: 14.5px; color: #444; }
.filter-list { padding-top: 3px; }
.fopt { height: 23px; display: flex; align-items: center; gap: 6px; padding-left: 7px; font: 15.5px "Noto Sans CJK KR", sans-serif; color: #555; }
.fopt span { margin-top: -2px; }
.fopt.on { background: #d6d6d6; }
.cb { width: 18px; height: 18px; border: 1px solid #ccc; background: #fff; display: flex; align-items: center; justify-content: center; flex: none; }
.cb-on { border-color: #666; border-radius: 2px; }

/* tabs */
.tabs { height: 38px; flex: none; background: #e6e6e6; border: 1px solid #ccc; border-width: 1px 0; display: grid;
  grid-template-columns: 162px 60px 59px 59px 60px 59px 59px 59px 59px 58px 68px 132px 126px 195px 69px 67px 68px 68px 107px 33px 32px 32px 1fr; }
.tab { border-right: 1px solid #ccc; display: flex; align-items: center; padding-left: 7px; font-size: 14.5px; color: #555; white-space: nowrap; }
.tab-ko { font: 16px "Noto Sans CJK KR", sans-serif; color: #555; }
.tab-src { padding-left: 11px; gap: 5px; }
.tab-on { background: #f9f9f9; }
.tab-dash { gap: 5px; }
.tab-icon { padding-left: 6px; }
.tab-fill { border-right: 0; }
.status { height: 26px; flex: none; background: #e9e9e9; display: grid; grid-template-columns: 1502px 156px 33px 32px 57px 70px 1fr; font: 13.5px/25px "Noto Sans CJK KR", sans-serif; color: #222; }
.st { border-right: 1px solid #cfcfcf; display: flex; align-items: center; }
.st-main { gap: 32px; padding-left: 4px; }
.st-nav { justify-content: center; }
.st-views { border-right: 0; gap: 13px; padding-left: 9px; }
```
